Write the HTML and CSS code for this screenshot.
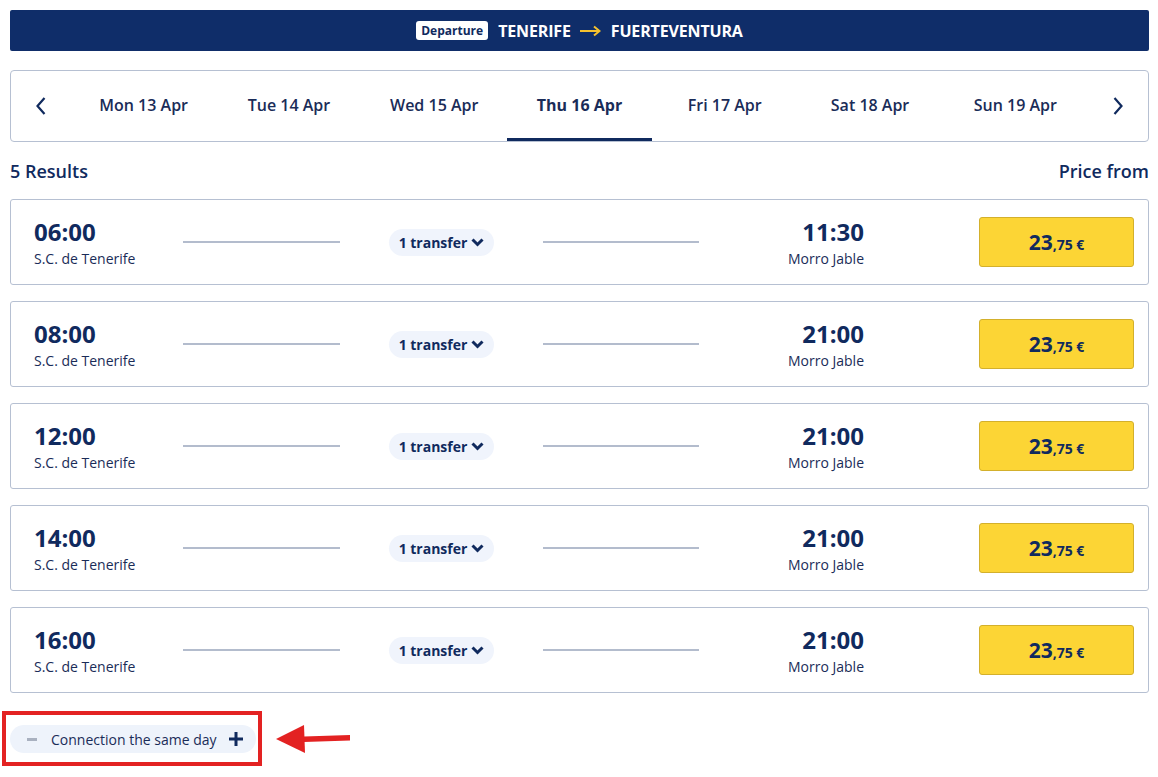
FILE: index.html
```html
<!doctype html>
<html lang="en">
    <head>
        <meta charset="UTF-8" />
        <meta name="viewport" content="width=device-width, initial-scale=1.0" />
        <title>Tenerife - Fuerteventura</title>
        <link rel="stylesheet" href="styles.css">
    </head>
    <body>
        <div class="page">
            <div class="route-bar">
                <span class="badge">Departure</span>
                <span class="city">TENERIFE</span>
                <svg class="route-arrow" width="22" height="12" viewBox="0 0 22 12">
                    <path d="M1 6H20M15 1.5L20.5 6L15 10.5" fill="none" stroke="#f5c12e" stroke-width="2" />
                </svg>
                <span class="city">FUERTEVENTURA</span>
            </div>

            <div class="dates">
                <button class="nav-arrow">
                    <svg width="12" height="20" viewBox="0 0 12 20">
                        <path d="M9.5 2L2.5 10L9.5 18" fill="none" stroke="#102a5e" stroke-width="2.2" />
                    </svg>
                </button>
                <div class="tab">Mon 13 Apr</div>
                <div class="tab">Tue 14 Apr</div>
                <div class="tab">Wed 15 Apr</div>
                <div class="tab active">Thu 16 Apr</div>
                <div class="tab">Fri 17 Apr</div>
                <div class="tab">Sat 18 Apr</div>
                <div class="tab">Sun 19 Apr</div>
                <button class="nav-arrow">
                    <svg width="12" height="20" viewBox="0 0 12 20">
                        <path d="M2.5 2L9.5 10L2.5 18" fill="none" stroke="#102a5e" stroke-width="2.2" />
                    </svg>
                </button>
            </div>

            <div class="results-head">
                <span>5 Results</span>
                <span>Price from</span>
            </div>

            <div class="trips" id="trips"></div>

            <div class="bottom">
                <div class="marked">
                    <div class="connection">
                        <span class="minus"></span>
                        <span class="connection-label">Connection the same day</span>
                        <svg width="14" height="14" viewBox="0 0 14 14">
                            <path d="M7 0V14M0 7H14" stroke="#102a5e" stroke-width="3" />
                        </svg>
                    </div>
                </div>
                <svg class="pointer" width="80" height="32" viewBox="0 0 80 32">
                    <path d="M30 13.5L76 12L76 17.5L30 19Z" fill="#e32222" />
                    <path d="M2 16L30 2L31 30Z" fill="#e32222" />
                </svg>
            </div>
        </div>

        <script>
            const trips = [
                { dep: "06:00", arr: "11:30" },
                { dep: "08:00", arr: "21:00" },
                { dep: "12:00", arr: "21:00" },
                { dep: "14:00", arr: "21:00" },
                { dep: "16:00", arr: "21:00" },
            ];

            const list = document.getElementById("trips");

            trips.forEach((trip) => {
                const card = document.createElement("div");
                card.className = "trip";
                card.innerHTML = `
                    <div class="stop">
                        <div class="time">${trip.dep}</div>
                        <div class="place">S.C. de Tenerife</div>
                    </div>
                    <div class="line"></div>
                    <div class="middle">
                        <span class="transfer">1 transfer
                            <svg width="13" height="9" viewBox="0 0 13 9">
                                <path d="M1.5 1.5L6.5 6.5L11.5 1.5" fill="none" stroke="#102a5e" stroke-width="3" />
                            </svg>
                        </span>
                    </div>
                    <div class="line"></div>
                    <div class="stop arrival">
                        <div class="time">${trip.arr}</div>
                        <div class="place">Morro Jable</div>
                    </div>
                    <div></div>
                    <button class="price">23<small>,75 €</small></button>
                `;
                list.appendChild(card);
            });
        </script>
    </body>
</html>
```

FILE: styles.css
```css
body {
    margin: 0;
    font-family: "Open Sans", "Noto Sans", sans-serif;
    background-color: #ffffff;
    color: #102a5e;
}
.page {
    padding: 10px 9px 0 10px;
}
.route-bar {
    display: flex;
    align-items: center;
    justify-content: center;
    gap: 8px;
    height: 41px;
    background-color: #0f2d69;
    border-radius: 2px;
    color: #ffffff;
}
.badge {
    background-color: #ffffff;
    color: #102a5e;
    font-size: 12px;
    font-weight: 700;
    padding: 1px 5px;
    border-radius: 3px;
    margin-right: 2px;
}
.city {
    font-size: 16px;
    font-weight: 700;
    letter-spacing: -0.15px;
}
.route-arrow {
    margin: 0 2px 0 0;
}
.dates {
    display: flex;
    margin-top: 19px;
    height: 72px;
    border: 1px solid #b6c0d2;
    border-radius: 4px;
    box-sizing: border-box;
}
.nav-arrow {
    width: 60px;
    flex: none;
    background: none;
    border: none;
    display: flex;
    align-items: center;
    justify-content: center;
    padding: 0;
    cursor: pointer;
}
.tab {
    flex: 1;
    display: flex;
    align-items: center;
    justify-content: center;
    font-size: 16px;
    font-weight: 600;
    color: #1a2c58;
    border-bottom: 3px solid transparent;
    padding-top: 1px;
}
.tab.active {
    font-weight: 700;
    border-bottom-color: #102a5e;
}
.results-head {
    display: flex;
    justify-content: space-between;
    font-size: 18px;
    font-weight: 600;
    line-height: 24px;
    margin: 17px 0 16px;
}
.trips {
    display: flex;
    flex-direction: column;
    gap: 16px;
}
.trip {
    display: grid;
    grid-template-columns: 149px 157px 203px 156px 165px 1fr 155px;
    align-items: center;
    height: 86px;
    box-sizing: border-box;
    border: 1px solid #b6c0d2;
    border-radius: 3px;
    padding: 0 14px 0 23px;
}
.time {
    font-size: 24px;
    font-weight: 700;
    line-height: 30px;
}
.place {
    font-size: 14px;
    line-height: 19px;
    margin-top: 2px;
    color: #1a2c58;
}
.arrival {
    text-align: right;
}
.line {
    height: 2px;
    background-color: #b3bccd;
}
.middle {
    display: flex;
    justify-content: center;
}
.transfer {
    display: inline-flex;
    align-items: center;
    gap: 4px;
    background-color: #f0f4fc;
    border-radius: 14px;
    height: 27px;
    padding: 0 10px;
    font-size: 14px;
    font-weight: 700;
}
.price {
    height: 50px;
    background-color: #fcd535;
    border: 1px solid #d3b02c;
    border-radius: 3px;
    font-family: inherit;
    color: #102a5e;
    font-size: 21px;
    font-weight: 700;
    cursor: pointer;
    padding: 0;
}
.price small {
    font-size: 14px;
}
.bottom {
    display: flex;
    align-items: center;
    gap: 12px;
    margin: 18px 0 0 -8px;
}
.marked {
    border: 4px solid #e32222;
    padding: 10px 2px 9px 4px;
}
.connection {
    display: flex;
    align-items: center;
    height: 28px;
    width: 246px;
    box-sizing: border-box;
    border-radius: 14px;
    background-color: #eef3fb;
    padding: 0 13px 0 17px;
}
.minus {
    width: 10px;
    height: 3px;
    background-color: #a9b1c0;
    margin-right: 14px;
}
.connection-label {
    flex: 1;
    font-size: 14px;
    color: #1a2c58;
}
```
